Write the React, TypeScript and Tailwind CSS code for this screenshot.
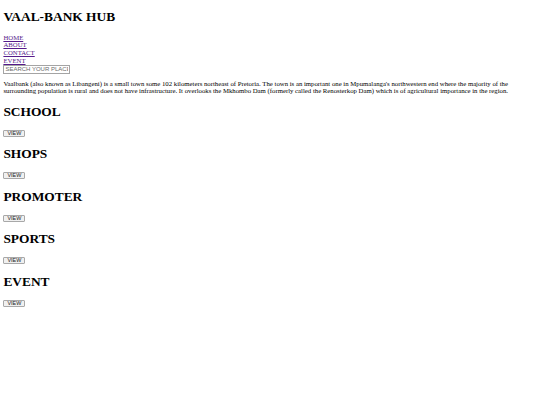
const sections = ['SCHOOL', 'SHOPS', 'PROMOTER', 'SPORTS', 'EVENT'];

const navLinks = ['HOME', 'ABOUT', 'CONTACT', 'EVENT'];

const App: React.FC = () => {
  return (
    <div className="min-h-screen bg-white px-[3.4px] font-['Liberation_Serif',serif] text-black">
      <h1 className="mt-[9px] mb-[9px] text-[13.4px] leading-[15.5px] font-bold">VAAL-BANK HUB</h1>

      <nav className="flex flex-col items-start">
        {navLinks.map((link) => (
          <a
            key={link}
            href="#"
            className="text-[6.75px] leading-[7.76px] text-[#551a8b] underline"
          >
            {link}
          </a>
        ))}
      </nav>

      <input
        type="text"
        placeholder="SEARCH YOUR PLACE"
        className="block h-[9px] w-[67px] border border-[#a4a4a4] bg-white px-[1px] font-['Liberation_Sans',sans-serif] text-[6px] text-black placeholder:text-[#6b6b6b] focus:outline-none"
      />

      <p className="mt-[6px] text-[6.75px] leading-[7.76px]">
        Vaalbank (also known as Libangeni) is a small town some 102 kilometers northeast of Pretoria. The town is an
        important one in Mpumalanga's northwestern end where the majority of the surrounding population is rural and
        does not have infrastructure. It overlooks the Mkhombo Dam (formerly called the Renosterkop Dam) which is of
        agricultural importance in the region.
      </p>

      <div className="mt-[8.9px] flex flex-col">
        {sections.map((name) => (
          <div key={name} className="flex flex-col items-start pb-[9.6px]">
            <h2 className="mb-[10.5px] text-[13.4px] leading-[15.4px] font-bold">{name}</h2>
            <button
              type="button"
              className="flex h-[7px] w-[22px] items-center justify-center rounded-[1px] border border-[#a8a8a8] bg-[#f0f0f0] font-['Liberation_Sans',sans-serif] text-[5.4px] leading-none text-[#222]"
            >
              VIEW
            </button>
          </div>
        ))}
      </div>
    </div>
  );
};

export default App;
